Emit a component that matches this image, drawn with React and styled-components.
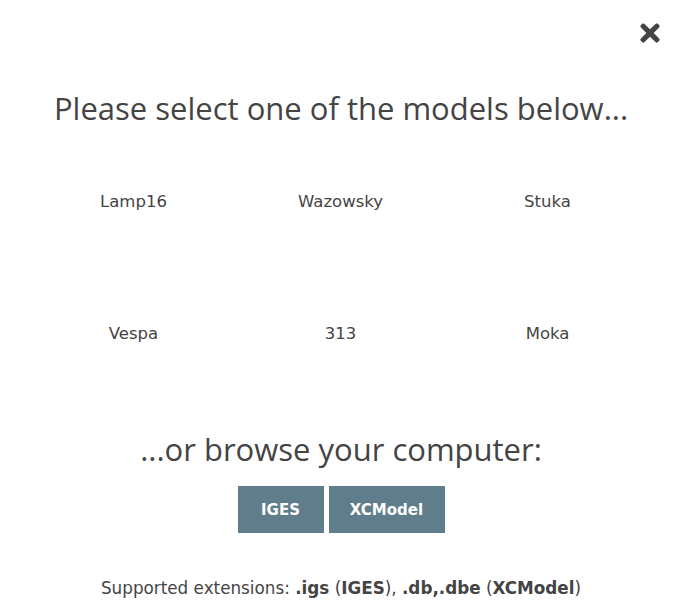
import React from "react";
import styled, { createGlobalStyle } from "styled-components";
import { FaTimes } from "react-icons/fa";

const GlobalStyle = createGlobalStyle`
    html, body {
        margin: 0;
        padding: 0;
        background: #ffffff;
    }
`;

const Dialog = styled.div`
    width: 682px;
    height: 614px;
    box-sizing: border-box;
    padding: 18px 20px 0 30px;
    display: flex;
    flex-direction: column;
    color: #444444;
`;

const TopBar = styled.div`
    display: flex;
    justify-content: flex-end;
    height: 30px;
`;

const CloseButton = styled.button`
    border: none;
    background: none;
    padding: 0;
    color: #444444;
    cursor: pointer;
    display: flex;
    align-items: center;
    justify-content: center;
    width: 26px;
    height: 30px;
    margin-right: -1px;
`;

const Heading = styled.h1`
    margin: ${(props) => props.margin};
    font-family: "Open Sans", "Noto Sans", sans-serif;
    font-weight: 400;
    font-size: 31px;
    line-height: 40px;
    text-align: center;
    color: #444444;
    padding-right: 10px;
`;

const ModelGrid = styled.div`
    display: grid;
    grid-template-columns: repeat(3, 207px);
    grid-auto-rows: 132px;
    margin-top: 64px;
`;

const ModelCell = styled.div`
    font-family: "DejaVu Sans", Verdana, sans-serif;
    font-size: 16.5px;
    color: #444444;
    text-align: center;
    line-height: 20px;
    cursor: pointer;
`;

const ButtonRow = styled.div`
    display: flex;
    justify-content: center;
    gap: 5px;
    margin-top: 17px;
    padding-right: 10px;
`;

const FormatButton = styled.button`
    height: 47px;
    width: ${(props) => props.width}px;
    border: none;
    background: #607d8b;
    color: #ffffff;
    font-family: "DejaVu Sans", Verdana, sans-serif;
    font-weight: 700;
    font-size: 15px;
    cursor: pointer;
`;

const Footer = styled.p`
    margin: 45px 0 0;
    padding-right: 10px;
    font-family: "DejaVu Sans", Verdana, sans-serif;
    font-size: 16.8px;
    line-height: 20px;
    text-align: center;
    color: #444444;

    b {
        font-weight: 700;
    }
`;

const models = [
    ["Lamp16", "Wazowsky", "Stuka"],
    ["Vespa", "313", "Moka"],
];

export default function App() {
    return (
        <>
            <GlobalStyle />
            <Dialog>
                <TopBar>
                    <CloseButton aria-label="Close">
                        <FaTimes size={28} />
                    </CloseButton>
                </TopBar>
                <Heading margin="40px 0 0">
                    Please select one of the models below...
                </Heading>
                <ModelGrid>
                    {models.flat().map((name) => (
                        <ModelCell key={name}>{name}</ModelCell>
                    ))}
                </ModelGrid>
                <Heading margin="-27px 0 0">...or browse your computer:</Heading>
                <ButtonRow>
                    <FormatButton width={86}>IGES</FormatButton>
                    <FormatButton width={116}>XCModel</FormatButton>
                </ButtonRow>
                <Footer>
                    Supported extensions: <b>.igs</b> (<b>IGES</b>),{" "}
                    <b>.db,.dbe</b> (<b>XCModel</b>)
                </Footer>
            </Dialog>
        </>
    );
}
